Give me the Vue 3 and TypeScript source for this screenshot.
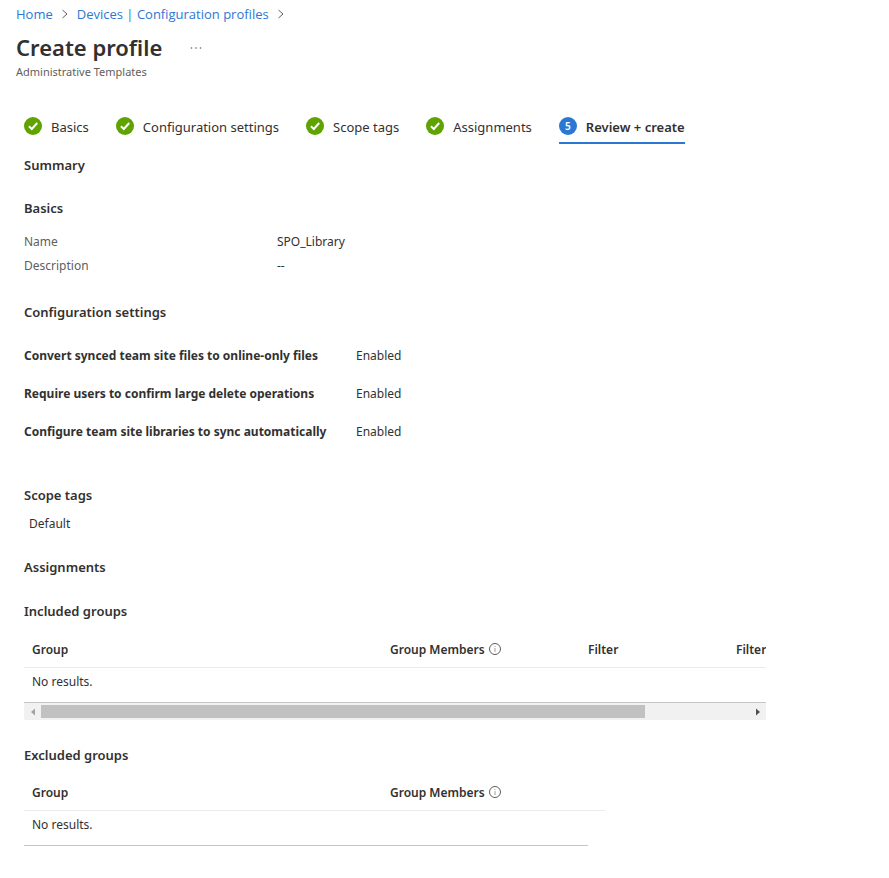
<script setup lang="ts">
import { computed, onMounted, onUnmounted, ref } from 'vue'

interface Step {
  label: string
  done: boolean
}

interface Field {
  label: string
  value: string
}

interface Column {
  label: string
  width: number
  info?: boolean
}

const steps: Step[] = [
  { label: 'Basics', done: true },
  { label: 'Configuration settings', done: true },
  { label: 'Scope tags', done: true },
  { label: 'Assignments', done: true },
  { label: 'Review + create', done: false },
]

const basics: Field[] = [
  { label: 'Name', value: 'SPO_Library' },
  { label: 'Description', value: '--' },
]

const settings: Field[] = [
  { label: 'Convert synced team site files to online-only files', value: 'Enabled' },
  { label: 'Require users to confirm large delete operations', value: 'Enabled' },
  { label: 'Configure team site libraries to sync automatically', value: 'Enabled' },
]

const includedColumns: Column[] = [
  { label: 'Group', width: 358 },
  { label: 'Group Members', width: 198, info: true },
  { label: 'Filter', width: 148 },
  { label: 'Filter', width: 166 },
]

const excludedColumns: Column[] = [
  { label: 'Group', width: 358 },
  { label: 'Group Members', width: 223, info: true },
]

const viewport = ref<HTMLElement | null>(null)
const scrollLeft = ref(0)
const viewWidth = ref(742)
const contentWidth = ref(870)

const thumbStyle = computed(() => ({
  width: `${(viewWidth.value / contentWidth.value) * 100}%`,
  marginLeft: `${(scrollLeft.value / contentWidth.value) * 100}%`,
}))

function measure() {
  const el = viewport.value
  if (!el) return
  scrollLeft.value = el.scrollLeft
  viewWidth.value = el.clientWidth
  contentWidth.value = el.scrollWidth
}

function scrollTable(delta: number) {
  viewport.value?.scrollBy({ left: delta })
}

onMounted(() => {
  measure()
  window.addEventListener('resize', measure)
})
onUnmounted(() => window.removeEventListener('resize', measure))
</script>

<template>
  <main class="page">
    <nav class="breadcrumb" aria-label="Breadcrumb">
      <a href="#home">Home</a>
      <svg class="chevron" viewBox="0 0 8 10"><path d="M1.5 1 6 5 1.5 9" /></svg>
      <a href="#profiles">Devices | Configuration profiles</a>
      <svg class="chevron" viewBox="0 0 8 10"><path d="M1.5 1 6 5 1.5 9" /></svg>
    </nav>

    <header class="heading">
      <div class="title-row">
        <h1>Create profile</h1>
        <button class="more" type="button" aria-label="More actions">
          <svg viewBox="0 0 12 4">
            <circle cx="1.5" cy="2" r="0.8" />
            <circle cx="6" cy="2" r="0.8" />
            <circle cx="10.5" cy="2" r="0.8" />
          </svg>
        </button>
      </div>
      <p class="subtitle">Administrative Templates</p>
    </header>

    <div class="content">
      <div class="steps" role="tablist">
        <button
          v-for="(step, i) in steps"
          :key="step.label"
          type="button"
          role="tab"
          class="step"
          :class="{ current: !step.done }"
          :aria-selected="!step.done"
        >
          <svg v-if="step.done" class="badge" viewBox="0 0 18 18">
            <circle cx="9" cy="9" r="9" fill="#5ea300" />
            <path d="M4.9 9.2 7.8 12 13.2 6" fill="none" stroke="#fff" stroke-width="2" />
          </svg>
          <span v-else class="badge number">{{ i + 1 }}</span>
          <span>{{ step.label }}</span>
        </button>
      </div>

      <h2 class="summary">Summary</h2>

      <section>
        <h2>Basics</h2>
        <dl class="basics">
          <template v-for="field in basics" :key="field.label">
            <dt>{{ field.label }}</dt>
            <dd>{{ field.value }}</dd>
          </template>
        </dl>
      </section>

      <section>
        <h2>Configuration settings</h2>
        <dl class="settings">
          <template v-for="field in settings" :key="field.label">
            <dt>{{ field.label }}</dt>
            <dd>{{ field.value }}</dd>
          </template>
        </dl>
      </section>

      <section>
        <h2>Scope tags</h2>
        <p class="tag">Default</p>
      </section>

      <section>
        <h2>Assignments</h2>
        <h3>Included groups</h3>
        <div class="included">
          <div ref="viewport" class="viewport" @scroll="measure">
            <table class="groups wide">
              <colgroup>
                <col v-for="(col, i) in includedColumns" :key="i" :style="{ width: `${col.width}px` }" />
              </colgroup>
              <thead>
                <tr>
                  <th v-for="(col, i) in includedColumns" :key="i" scope="col">
                    <span class="th-label">
                      {{ col.label }}
                      <svg v-if="col.info" class="info" viewBox="0 0 12 12">
                        <circle cx="6" cy="6" r="5.5" />
                        <path d="M6 5v4M6 3v1" />
                      </svg>
                    </span>
                  </th>
                </tr>
              </thead>
              <tbody>
                <tr>
                  <td :colspan="includedColumns.length">No results.</td>
                </tr>
              </tbody>
            </table>
          </div>
          <div class="scrollbar">
            <button type="button" class="arrow muted" aria-label="Scroll left" @click="scrollTable(-40)">
              <svg viewBox="0 0 4 8"><path d="M4 0.5v7L0 4z" /></svg>
            </button>
            <div class="track"><div class="thumb" :style="thumbStyle"></div></div>
            <button type="button" class="arrow" aria-label="Scroll right" @click="scrollTable(40)">
              <svg viewBox="0 0 4 8"><path d="M0 0.5v7L4 4z" /></svg>
            </button>
          </div>
        </div>

        <h3>Excluded groups</h3>
        <div class="excluded">
          <table class="groups">
            <colgroup>
              <col v-for="(col, i) in excludedColumns" :key="i" :style="{ width: `${col.width}px` }" />
            </colgroup>
            <thead>
              <tr>
                <th v-for="(col, i) in excludedColumns" :key="i" scope="col">
                  <span class="th-label">
                    {{ col.label }}
                    <svg v-if="col.info" class="info" viewBox="0 0 12 12">
                      <circle cx="6" cy="6" r="5.5" />
                      <path d="M6 5v4M6 3v1" />
                    </svg>
                  </span>
                </th>
              </tr>
            </thead>
            <tbody>
              <tr>
                <td :colspan="excludedColumns.length">No results.</td>
              </tr>
            </tbody>
          </table>
          <hr />
        </div>
      </section>
    </div>
  </main>
</template>

<style>
body {
  background: #fff;
}
</style>

<style scoped>
.page {
  padding: 4px 16px 24px;
  font-family: 'Segoe UI', 'Noto Sans', 'Open Sans', sans-serif;
  font-size: 12px;
  line-height: 20px;
  color: #323130;
}

h1,
h2,
h3,
p,
dl,
dd,
hr {
  margin: 0;
}

button {
  padding: 0;
  border: 0;
  background: none;
  font: inherit;
  color: inherit;
}

.breadcrumb {
  display: flex;
  align-items: center;
  gap: 8px;
  font-family: 'Segoe UI', 'Open Sans', sans-serif;
  font-size: 13px;
}

.breadcrumb a {
  color: #2b78d4;
  text-decoration: none;
}

.chevron {
  width: 8px;
  height: 10px;
  fill: none;
  stroke: #605e5c;
}

.title-row {
  display: flex;
  align-items: center;
  gap: 28px;
  padding-top: 7px;
}

h1 {
  font-family: 'Segoe UI', 'Noto Sans', sans-serif;
  font-size: 22px;
  font-weight: 600;
  line-height: 33px;
}

.more {
  display: flex;
}

.more svg {
  width: 12px;
  height: 4px;
  fill: #605e5c;
}

.subtitle {
  font-size: 11px;
  line-height: 16px;
  color: #605e5c;
}

.content {
  padding: 32px 8px 0;
}

.steps {
  display: flex;
  flex-wrap: wrap;
  gap: 27px;
}

.step {
  display: flex;
  align-items: center;
  gap: 9px;
  height: 32px;
  border-bottom: 2px solid transparent;
  font-size: 13px;
}

.step.current {
  border-color: #2b78d4;
  font-weight: 600;
}

.badge {
  width: 18px;
  height: 18px;
  margin-bottom: 2px;
}

.number {
  border-radius: 50%;
  background: #2b78d4;
  font-size: 10px;
  line-height: 18px;
  text-align: center;
  color: #fff;
}

h2,
h3 {
  font-size: 13px;
  font-weight: 600;
}

.summary {
  margin-top: 11px;
}

section {
  margin-top: 23px;
}

.basics {
  display: grid;
  grid-template-columns: 253px 1fr;
  row-gap: 4px;
  margin: 14px 0 26px;
}

.basics dt {
  color: #605e5c;
}

.settings {
  display: grid;
  grid-template-columns: 332px 1fr;
  row-gap: 18px;
  margin: 24px 0 43px;
}

.settings dt {
  font-weight: 700;
}

.tag {
  margin-top: 9px;
  padding-left: 5px;
}

h3 {
  margin-top: 24px;
}

.included {
  max-width: 742px;
  margin-top: 11px;
}

.viewport {
  overflow-x: auto;
  scrollbar-width: none;
}

.groups {
  width: 100%;
  border-collapse: collapse;
  table-layout: fixed;
  text-align: left;
}

.wide {
  width: 870px;
}

th {
  height: 35px;
  padding: 0 0 0 8px;
  border-bottom: 1px solid #edebe9;
  font-weight: 600;
}

td {
  height: 28px;
  padding: 0 8px 6px;
}

.th-label {
  display: flex;
  align-items: center;
  gap: 4px;
}

.info {
  width: 12px;
  height: 12px;
  margin-bottom: 2px;
  fill: none;
  stroke: #605e5c;
}

.info path {
  stroke: #a19f9d;
}

.scrollbar {
  display: flex;
  height: 17px;
  border-top: 1px solid #c8c6c4;
  background: #f1f1f1;
}

.arrow {
  display: grid;
  place-items: center;
  width: 17px;
  color: #505050;
}

.arrow svg {
  width: 4px;
  height: 8px;
  fill: currentColor;
}

.muted {
  color: #a3a3a3;
}

.track {
  flex: 1;
  padding: 2px 0;
}

.thumb {
  height: 13px;
  background: #c1c1c1;
}

.included + h3 {
  margin-top: 25px;
}

.excluded {
  max-width: 581px;
  margin-top: 10px;
}

hr {
  max-width: 564px;
  border: 0;
  border-top: 1px solid #c8c6c4;
}
</style>
